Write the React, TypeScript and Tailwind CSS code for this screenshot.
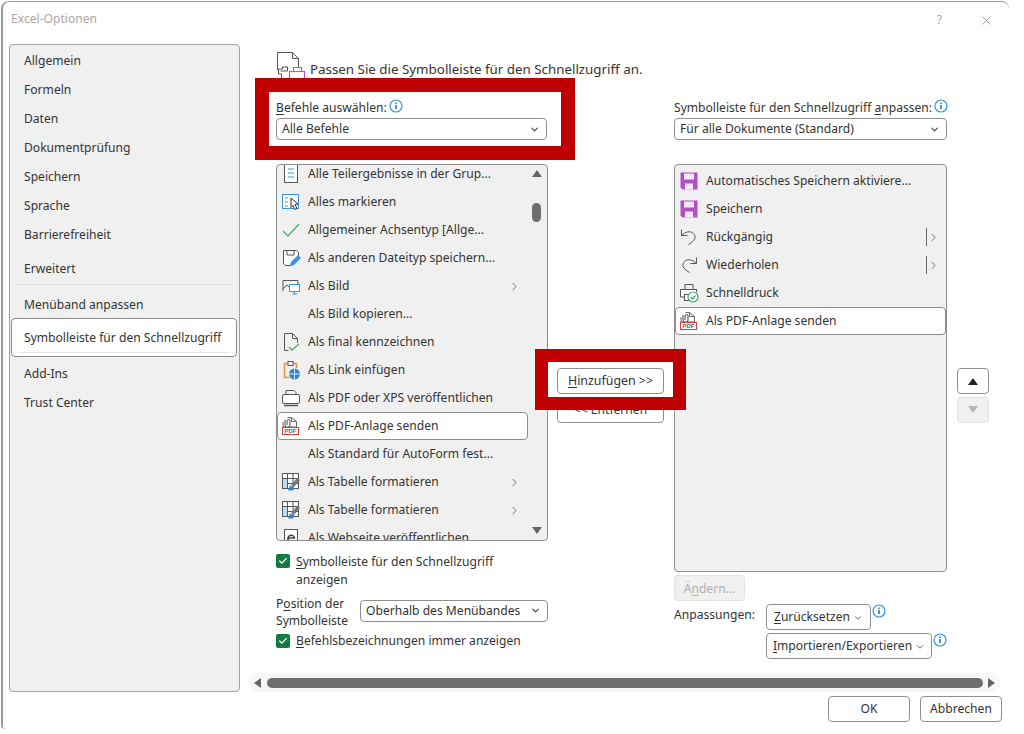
import React from 'react';
import { ChevronDown, ChevronRight, Check, X } from 'lucide-react';

type IconProps = { className?: string };

const Svg: React.FC<{ children: React.ReactNode }> = ({ children }) => (
  <svg width="20" height="20" viewBox="0 0 20 20" fill="none" className="shrink-0">
    {children}
  </svg>
);

const DocLinesIcon = () => (
  <Svg>
    <rect x="3.5" y="0.5" width="13" height="18" fill="#fff" stroke="#555" />
    <path d="M7 5h6M7 9h6M7 13h6" stroke="#3a96dd" />
  </Svg>
);
const SelectAllIcon = () => (
  <Svg>
    <rect x="1.5" y="2.5" width="16" height="14" fill="#fff" stroke="#3a96dd" />
    <path d="M4 6h3M4 10h3M4 14h3" stroke="#3a96dd" />
    <path d="M10 6l7 6-3 .5 2 4-2 1-2-4-2 2z" fill="#fff" stroke="#333" />
  </Svg>
);
const TickIcon = () => (
  <Svg>
    <path d="M2 11l5 5L18 4" stroke="#4caf6d" strokeWidth="1.3" />
  </Svg>
);
const SaveAsIcon = () => (
  <Svg>
    <path d="M2.5 2.5h13l2 2v5l-7 8h-6l-2-2z" fill="#fff" stroke="#555" />
    <path d="M6 3v4h7V3" stroke="#555" />
    <path d="M9 18l1-4 7-7 3 3-7 7z" fill="#3a96dd" />
  </Svg>
);
const PictureIcon = () => (
  <Svg>
    <path d="M2 15V4.500h15V8" stroke="#555" />
    <path d="M2 13l4-4 3 3" stroke="#555" />
    <rect x="8.500" y="8.500" width="10" height="7" fill="#fff" stroke="#3a96dd" />
    <path d="M11 18h5M13.500 15.500V18" stroke="#3a96dd" />
  </Svg>
);
const FinalIcon = () => (
  <Svg>
    <path d="M3.500 18.500v-17h8l5 5v4M3.500 18.500h4M11.500 1.500v5h5" stroke="#555" />
    <path d="M8 15l3 3 7-6" stroke="#4caf6d" strokeWidth="1.300" />
  </Svg>
);
const LinkPasteIcon = () => (
  <Svg>
    <path d="M7 3.500H3.500v14H8M12 3.500h3.500V8" stroke="#e8912d" strokeWidth="1.500" />
    <rect x="7" y="1.500" width="5" height="4" fill="#fff" stroke="#555" />
    <circle cx="13.500" cy="14" r="5.500" fill="#2f86d6" />
    <path d="M8 14h11M13.500 8.500v11" stroke="#fff" strokeWidth="0.800" />
  </Svg>
);
const PublishIcon = () => (
  <Svg>
    <path d="M5 6V2.500h8l2 2V6" stroke="#555" />
    <rect x="1.500" y="6.500" width="17" height="9" rx="1.500" fill="#fff" stroke="#555" />
    <path d="M3 17.500h14" stroke="#555" strokeWidth="1.500" />
  </Svg>
);
const PdfMailIcon = () => (
  <Svg>
    <path d="M6.500 1.500h4l5 4V11H2V6" fill="#fff" stroke="#666" />
    <path d="M6 9V5a1.500 1.500 0 013 0v4a2.500 2.500 0 01-5 0V4" stroke="#444" />
    <path d="M10.500 1.500v4h5" stroke="#666" />
    <rect x="1.500" y="11.500" width="16" height="7" fill="#fff" stroke="#e0393e" />
    <text x="9.500" y="17.300" textAnchor="middle" fontSize="6" fontWeight="700" fill="#666" fontFamily="Liberation Sans, sans-serif">
      PDF
    </text>
  </Svg>
);
const TableIcon = () => (
  <Svg>
    <rect x="1.500" y="1.500" width="16" height="15" fill="#fff" stroke="#555" />
    <path d="M1.500 6.500h16M1.500 11.500h16M6.500 1.500v15M12 1.500v15" stroke="#555" />
    <rect x="2" y="7" width="4" height="9" fill="#bcdcf3" />
    <path d="M10 13l6-7 3 2-6 7z" fill="#777" />
    <path d="M7 18.500l2-5 4 2-1 3z" fill="#2f86d6" />
  </Svg>
);
const WebIcon = () => (
  <Svg>
    <rect x="3.500" y="1.500" width="13" height="17" fill="#fff" stroke="#555" />
    <path d="M7 10h6.500a3.300 3.300 0 10-1 3" stroke="#444" strokeWidth="1.500" />
    <path d="M13 18l3-4 3.500 4z" fill="#2f86d6" />
  </Svg>
);
const PurpleSaveIcon = () => (
  <Svg>
    <path d="M1.500 1.500h17v17h-15l-2-2z" fill="#b14fc5" />
    <rect x="5" y="2.500" width="10" height="6" fill="#f7e7fa" />
    <rect x="6" y="12.500" width="8" height="6" fill="#f7e7fa" />
  </Svg>
);
const UndoIcon = () => (
  <Svg>
    <path d="M2.500 2.500v6h6" stroke="#555" />
    <path d="M2.500 8.500c4-4 9-5 12-2s2 7-5 11" stroke="#555" />
  </Svg>
);
const RedoIcon = () => (
  <Svg>
    <path d="M17.500 2.500v6h-6" stroke="#555" />
    <path d="M17.500 8.500c-4-4-9-5-12-2s-2 7 5 11" stroke="#555" />
  </Svg>
);
const QuickPrintIcon = () => (
  <Svg>
    <path d="M6 6V1.500h8V6" stroke="#555" />
    <path d="M5 14H1.500V6.500h16V9" fill="#fff" stroke="#555" />
    <rect x="5.500" y="11.500" width="6" height="6" fill="#fff" stroke="#555" />
    <circle cx="14" cy="14" r="5" fill="#fff" stroke="#3fae6a" strokeWidth="1.200" />
    <path d="M11.500 14l2 2 3-3.500" stroke="#3fae6a" strokeWidth="1.200" />
  </Svg>
);

const InfoIcon: React.FC<IconProps> = ({ className }) => (
  <svg width="14" height="14" viewBox="0 0 14 14" fill="none" className={`shrink-0 ${className ?? ''}`}>
    <circle cx="7" cy="7" r="6" fill="#fff" stroke="#2e9be6" strokeWidth="1.200" />
    <path d="M7 6v4" stroke="#1f6fb5" strokeWidth="1.500" />
    <path d="M7 3.500v1.400" stroke="#1f6fb5" strokeWidth="1.500" />
  </svg>
);

const Triangle: React.FC<{ dir: 'up' | 'down' | 'left' | 'right'; color?: string }> = ({ dir, color = '#666' }) => {
  const points = {
    up: '0,8 5,1 10,8',
    down: '0,1 10,1 5,8',
    left: '8,0 8,10 1,5',
    right: '1,0 1,10 8,5',
  }[dir];
  return (
    <svg width="10" height="10" viewBox="0 0 10 10" className="shrink-0">
      <polygon points={points} fill={color} />
    </svg>
  );
};

const navTop = ['Allgemein', 'Formeln', 'Daten', 'Dokumentprüfung', 'Speichern', 'Sprache', 'Barrierefreiheit'];

const commands: { icon?: React.ReactNode; label: string; more?: boolean; selected?: boolean }[] = [
  { icon: <DocLinesIcon />, label: 'Alle Teilergebnisse in der Grup...' },
  { icon: <SelectAllIcon />, label: 'Alles markieren' },
  { icon: <TickIcon />, label: 'Allgemeiner Achsentyp [Allge...' },
  { icon: <SaveAsIcon />, label: 'Als anderen Dateityp speichern...' },
  { icon: <PictureIcon />, label: 'Als Bild', more: true },
  { label: 'Als Bild kopieren...' },
  { icon: <FinalIcon />, label: 'Als final kennzeichnen' },
  { icon: <LinkPasteIcon />, label: 'Als Link einfügen' },
  { icon: <PublishIcon />, label: 'Als PDF oder XPS veröffentlichen' },
  { icon: <PdfMailIcon />, label: 'Als PDF-Anlage senden', selected: true },
  { label: 'Als Standard für AutoForm fest...' },
  { icon: <TableIcon />, label: 'Als Tabelle formatieren', more: true },
  { icon: <TableIcon />, label: 'Als Tabelle formatieren', more: true },
  { icon: <WebIcon />, label: 'Als Webseite veröffentlichen' },
];

const toolbar: { icon: React.ReactNode; label: string; split?: boolean; selected?: boolean }[] = [
  { icon: <PurpleSaveIcon />, label: 'Automatisches Speichern aktiviere...' },
  { icon: <PurpleSaveIcon />, label: 'Speichern' },
  { icon: <UndoIcon />, label: 'Rückgängig', split: true },
  { icon: <RedoIcon />, label: 'Wiederholen', split: true },
  { icon: <QuickPrintIcon />, label: 'Schnelldruck' },
  { icon: <PdfMailIcon />, label: 'Als PDF-Anlage senden', selected: true },
];

const Dropdown: React.FC<{ label: string; className?: string }> = ({ label, className }) => (
  <div className={`flex h-[22px] items-center justify-between rounded-[4px] border border-[#8f8f8f] bg-white pl-[5px] pr-[6px] ${className ?? ''}`}>
    <span className="pt-px">{label}</span>
    <ChevronDown size={11} strokeWidth={2.5} color="#444" />
  </div>
);

const DialogButton: React.FC<{ children: React.ReactNode; className?: string }> = ({ children, className }) => (
  <div className={`flex items-center justify-center rounded-[4px] border border-[#8f8f8f] bg-white pt-px ${className ?? ''}`}>{children}</div>
);

const GreenCheck = () => (
  <span className="flex h-[14px] w-[14px] shrink-0 items-center justify-center rounded-[2px] bg-[#107c41]">
    <Check size={10} strokeWidth={3} color="#fff" />
  </span>
);

export default function App() {
  return (
    <div className="relative h-[734px] w-[1024px] overflow-hidden bg-white font-['Noto_Sans',sans-serif] text-[12.1px] leading-none text-[#333]">
      <div className="mt-px ml-px flex h-[728px] w-[1008px] flex-col rounded-t-lg rounded-bl-sm border-t border-l-2 border-[#999] bg-white">
        {/* Title bar */}
        <div className="flex h-[42px] shrink-0 items-start justify-between pt-[11px] pl-[8px] pr-[15px] text-[#a8a8a8]">
          <span>Excel-Optionen</span>
          <div className="flex items-center gap-[37px]">
            <span>?</span>
            <X size={15} strokeWidth={1} color="#777" />
          </div>
        </div>

        <div className="flex h-[648px] shrink-0 pl-[6px]">
          {/* Left navigation */}
          <div className="flex w-[231px] shrink-0 flex-col rounded-[4px] border border-[#a3a3a3] bg-[#f0f0f0] pt-[2px]">
            {navTop.map((item) => (
              <div key={item} className="flex h-[29px] shrink-0 items-center pl-[14px]">
                {item}
              </div>
            ))}
            <div className="mt-[5px] flex h-[29px] shrink-0 items-center pl-[14px]">Erweitert</div>
            <div className="mx-[7px] h-px shrink-0 bg-[#dcdcdc]" />
            <div className="mt-[6px] flex h-[28px] shrink-0 items-center pl-[14px]">Menüband anpassen</div>
            <div className="relative mt-[-1px] mr-[2px] ml-px flex h-[39px] shrink-0 items-center rounded-[4px] border border-[#8c8c8c] bg-white pt-[2px] pl-[12px]">
              Symbolleiste für den Schnellzugriff
              <div className="absolute right-[6px] bottom-[3px] left-[6px] h-px bg-[#e6e6e6]" />
            </div>
            <div className="mt-[3px] flex h-[29px] shrink-0 items-center pl-[14px]">Add-Ins</div>
            <div className="flex h-[29px] shrink-0 items-center pl-[14px]">Trust Center</div>
          </div>

          {/* Main panel */}
          <div className="ml-[9px] flex w-[752px] flex-col">
            <div className="flex-1 pl-[27px]">
              <div className="flex h-[54px] items-start">
                <svg width="31" height="30" viewBox="0 0 31 30" fill="none" className="mt-[7px] shrink-0">
                  <path d="M1.500 19V1.500h15l6 6V16M16.500 1.500v6h6" stroke="#555" />
                  <path d="M4.500 20h7v-4h-5v2h-4v5h3v6h7" fill="#fff" stroke="#555" />
                  <rect x="13.500" y="20.500" width="15" height="9" fill="#fff" stroke="#c04fd0" strokeWidth="1.200" />
                  <rect x="17.500" y="16.500" width="8" height="4" fill="#fff" stroke="#c04fd0" />
                </svg>
                <span className="mt-[19px] ml-[3px] text-[13.350px]">Passen Sie die Symbolleiste für den Schnellzugriff an.</span>
              </div>

              <div className="flex">
                {/* Available commands */}
                <div className="flex w-[272px] shrink-0 flex-col">
                  <div className="flex h-[20px] items-center gap-[2px]">
                    <span>
                      <u className="underline-offset-2">B</u>efehle auswählen:
                    </span>
                    <InfoIcon className="-mt-[4px]" />
                  </div>
                  <Dropdown label="Alle Befehle" className="mr-px" />
                  <div className="mt-[24px] flex h-[377px] overflow-hidden rounded-[4px] border border-[#8f8f8f] bg-[#f0f0f0]">
                    <div className="-mt-[5px] h-[392px] w-[251px] shrink-0">
                      {commands.map((c, i) => (
                        <div
                          key={i}
                          className={`flex h-[28px] items-center pr-[7px] ${c.selected ? 'rounded-[4px] border border-[#8c8c8c] bg-white pl-[3px]' : 'pl-[4px]'}`}
                        >
                          <span className="w-[27px] shrink-0">{c.icon}</span>
                          <span className="flex-1 whitespace-nowrap">{c.label}</span>
                          {c.more && <ChevronRight size={13} strokeWidth={1.500} color="#555" />}
                        </div>
                      ))}
                    </div>
                    <div className="flex flex-1 flex-col items-center justify-between py-[4px] pr-px">
                      <div>
                        <Triangle dir="up" />
                        <div className="mt-[24px] h-[19px] w-[9px] rounded-full bg-[#6e6e6e]" />
                      </div>
                      <Triangle dir="down" />
                    </div>
                  </div>
                  <div className="mt-[13px] flex items-start gap-[6px]">
                    <GreenCheck />
                    <span className="-mt-[1px] leading-[18px]">
                      <u className="underline-offset-2">S</u>ymbolleiste für den Schnellzugriff
                      <br />
                      anzeigen
                    </span>
                  </div>
                  <div className="mt-[6px] flex items-center justify-between">
                    <span className="leading-[17px]">
                      P<u className="underline-offset-2">o</u>sition der
                      <br />
                      Symbolleiste
                    </span>
                    <Dropdown label="Oberhalb des Menübandes" className="-mt-[3px] w-[188px]" />
                  </div>
                  <div className="mt-[5px] flex items-center gap-[6px]">
                    <GreenCheck />
                    <span>
                      <u className="underline-offset-2">B</u>efehlsbezeichnungen immer anzeigen
                    </span>
                  </div>
                </div>

                {/* Add / remove */}
                <div className="ml-[9px] flex w-[107px] shrink-0 flex-col gap-[3px] pt-[270px]">
                  <DialogButton className="h-[26px]">
                    <span className="text-[12.400px]">
                      <u className="underline-offset-2">H</u>inzufügen &gt;&gt;
                    </span>
                  </DialogButton>
                  <DialogButton className="h-[26px]">&lt;&lt; Entfernen</DialogButton>
                </div>

                {/* Quick access toolbar */}
                <div className="ml-[10px] flex w-[273px] shrink-0 flex-col">
                  <div className="flex h-[20px] items-center gap-[2px] whitespace-nowrap">
                    <span>
                      Symbolleiste für den Schnellzugriff <u className="underline-offset-2">a</u>npassen:
                    </span>
                    <InfoIcon className="-mt-[4px]" />
                  </div>
                  <Dropdown label="Für alle Dokumente (Standard)" />
                  <div className="mt-[24px] h-[408px] rounded-[4px] border border-[#8f8f8f] bg-[#f0f0f0] pt-[2px]">
                    {toolbar.map((t) => (
                      <div
                        key={t.label}
                        className={`flex h-[28px] items-center pr-[6px] ${t.selected ? 'rounded-[4px] border border-[#8c8c8c] bg-white pl-[3px]' : 'pl-[4px]'}`}
                      >
                        <span className="w-[27px] shrink-0">{t.icon}</span>
                        <span className="flex-1 whitespace-nowrap">{t.label}</span>
                        {t.split && (
                          <span className="flex items-center">
                            <span className="h-[18px] w-px bg-[#666]" />
                            <ChevronRight size={13} strokeWidth={1.500} color="#555" />
                          </span>
                        )}
                      </div>
                    ))}
                  </div>
                  <div className="mt-[3px] flex h-[26px] w-[71px] items-center justify-center rounded-[4px] border border-[#e2e2e2] bg-[#f0f0f0] pt-[2px] text-[#b0b0b0]">
                    <span>
                      Ä<u className="underline-offset-2">n</u>dern...
                    </span>
                  </div>
                  <div className="mt-[3px] flex">
                    <span className="w-[93px] pt-[5px]">Anpassungen:</span>
                    <div className="flex flex-col gap-[3px]">
                      <div className="flex items-start gap-[1px]">
                        <DialogButton className="h-[26px] w-[105px] gap-[3px]">
                          <span>
                            <u className="underline-offset-2">Z</u>urücksetzen
                          </span>
                          <ChevronDown size={10} strokeWidth={2} color="#444" />
                        </DialogButton>
                        <InfoIcon />
                      </div>
                      <div className="flex items-start gap-[1px]">
                        <DialogButton className="h-[26px] w-[166px] gap-[3px]">
                          <span>
                            <u className="underline-offset-2">I</u>mportieren/Exportieren
                          </span>
                          <ChevronDown size={10} strokeWidth={2} color="#444" />
                        </DialogButton>
                        <InfoIcon />
                      </div>
                    </div>
                  </div>
                </div>

                {/* Move up / down */}
                <div className="ml-[10px] flex w-[32px] shrink-0 flex-col gap-[3px] pt-[270px]">
                  <DialogButton className="h-[26px]">
                    <Triangle dir="up" color="#222" />
                  </DialogButton>
                  <div className="flex h-[26px] items-center justify-center rounded-[4px] border border-[#e2e2e2] bg-[#f0f0f0]">
                    <Triangle dir="down" color="#b5b5b5" />
                  </div>
                </div>
              </div>
            </div>

            {/* Horizontal scrollbar */}
            <div className="flex h-[19px] shrink-0 items-center gap-[4px] rounded-full bg-[#f7f7f7] px-[4px]">
              <Triangle dir="left" />
              <div className="h-[10px] flex-1 rounded-full bg-[#6e6e6e]" />
              <Triangle dir="right" />
            </div>
          </div>
        </div>

        {/* Footer */}
        <div className="flex justify-end gap-[10px] pt-[4px] pr-[7px]">
          <DialogButton className="h-[26px] w-[82px]">OK</DialogButton>
          <DialogButton className="h-[26px] w-[82px]">Abbrechen</DialogButton>
        </div>
      </div>

      {/* Red annotation frames */}
      <div className="absolute top-[78px] left-[255px] h-[82px] w-[320px] border-[14px] border-[#c00000]" />
      <div className="absolute top-[349px] left-[535px] h-[61px] w-[151px] border-[13px] border-[#c00000]" />
    </div>
  );
}
